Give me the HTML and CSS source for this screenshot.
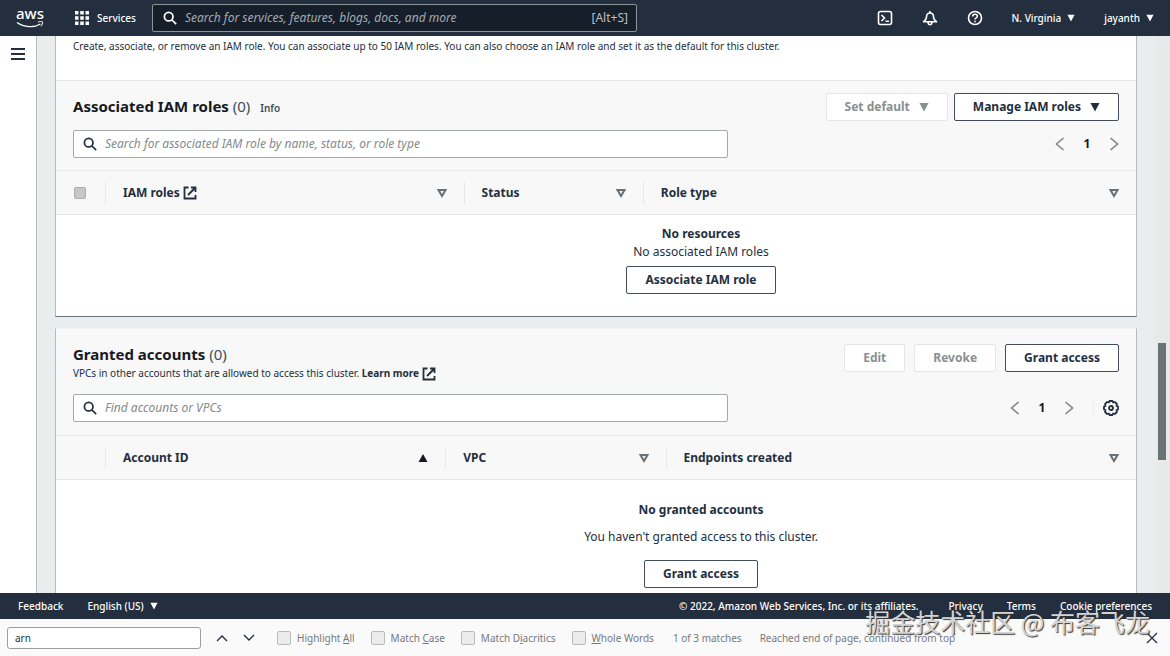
FILE: index.html
```html
<!DOCTYPE html>
<html lang="en">
  <head>
    <meta charset="UTF-8" />
    <meta name="viewport" content="width=device-width, initial-scale=1.0" />
    <title>Amazon Redshift</title>
    <link rel="stylesheet" href="styles.css">
  </head>

  <body>
    <!-- shared icons -->
    <svg class="sprite" aria-hidden="true">
      <symbol id="search" viewBox="0 0 16 16">
        <circle cx="6.5" cy="6.5" r="4.900" fill="none" stroke="currentColor" stroke-width="2" />
        <path d="M10 10l5 5" stroke="currentColor" stroke-width="2" />
      </symbol>
      <symbol id="down" viewBox="0 0 10 10">
        <path d="M.5 1h9L5 9.500z" fill="currentColor" />
      </symbol>
      <symbol id="up" viewBox="0 0 10 10">
        <path d="M.5 9h9L5 1z" fill="currentColor" />
      </symbol>
      <symbol id="sort" viewBox="0 0 10 10">
        <path d="M1.500 2h7L5 8z" fill="none" stroke="currentColor" stroke-width="2" />
      </symbol>
      <symbol id="external" viewBox="0 0 14 14">
        <path d="M5.500 1.500H1.500v11h11V9M8 1.500h4.500V6M12.500 1.500L5 9" fill="none" stroke="currentColor" stroke-width="1.800" />
      </symbol>
      <symbol id="left" viewBox="0 0 10 14">
        <path d="M8.500 1L1.500 7l7 6" fill="none" stroke="currentColor" stroke-width="1.600" />
      </symbol>
      <symbol id="right" viewBox="0 0 10 14">
        <path d="M1.500 1l7 6-7 6" fill="none" stroke="currentColor" stroke-width="1.600" />
      </symbol>
    </svg>

    <header class="topbar">
      <a class="logo" href="#" aria-label="AWS home">
        <span>aws</span>
        <svg viewBox="0 0 28 8" width="28" height="8">
          <path d="M1 1.500c7 5 17 5.500 23.500 1.500" fill="none" stroke="currentColor" stroke-width="1.300" />
          <path d="M22 1c2-.6 3.700-.6 4.500-.2.300 1.300-.3 3-1.500 4.500" fill="none" stroke="currentColor" />
        </svg>
      </a>
      <button class="services">
        <svg viewBox="0 0 14 14" width="14" height="14" fill="currentColor">
          <path d="M0 0h3.500v3.500H0zM5.250 0h3.500v3.500h-3.500zM10.500 0H14v3.500h-3.500zM0 5.250h3.500v3.500H0zM5.250 5.250h3.500v3.500h-3.500zM10.500 5.250H14v3.500h-3.500zM0 10.500h3.500V14H0zM5.250 10.500h3.500V14h-3.500zM10.500 10.500H14V14h-3.500z" />
        </svg>
        Services
      </button>
      <label class="top-search">
        <svg class="icon-search"><use href="#search" /></svg>
        <input type="text" aria-label="Search services" placeholder="Search for services, features, blogs, docs, and more" />
        <span>[Alt+S]</span>
      </label>
      <nav class="top-nav">
        <button aria-label="CloudShell">
          <svg viewBox="0 0 16 16" width="16" height="16" fill="none" stroke="currentColor" stroke-width="1.600">
            <rect x="1.500" y="1.500" width="13" height="13" rx="2" />
            <path d="M4.500 5l3 3-3 3M8.500 11.200h3.500" />
          </svg>
        </button>
        <button aria-label="Notifications">
          <svg viewBox="0 0 16 16" width="16" height="16" fill="none" stroke="currentColor" stroke-width="1.600" stroke-linejoin="round">
            <path d="M8 1v2M1.500 11.700c2.200-1.500 3-3 3-5C4.500 4.500 6 3 8 3s3.500 1.500 3.500 3.700c0 2 .8 3.500 3 5zM6.200 12v1c0 2.200 3.600 2.200 3.600 0v-1" />
          </svg>
        </button>
        <button aria-label="Help">
          <svg viewBox="0 0 16 16" width="16" height="16" fill="none" stroke="currentColor" stroke-width="1.600">
            <circle cx="8" cy="8" r="6.500" />
            <path d="M5.700 6.500c0-3 4.600-2.800 4.600-.2C10.300 8 8 7.700 8 9.500M8 10.700v1.600" />
          </svg>
        </button>
        <button class="menu">N. Virginia <svg class="caret"><use href="#down" /></svg></button>
        <button class="menu">jayanth <svg class="caret"><use href="#down" /></svg></button>
      </nav>
    </header>

    <div class="content">
      <aside class="side">
        <button aria-label="Open navigation">
          <svg viewBox="0 0 14 12" width="14" height="12">
            <path d="M0 1h14M0 6h14M0 11h14" stroke="currentColor" stroke-width="2" />
          </svg>
        </button>
      </aside>

      <main>
        <section class="panel roles">
          <p class="intro">Create, associate, or remove an IAM role. You can associate up to 50 IAM roles. You can also choose an IAM role and set it as the default for this cluster.</p>
          <div class="panel-head">
            <div class="title-row">
              <h2>Associated IAM roles <span>(0)</span> <a href="#">Info</a></h2>
              <div class="actions">
                <button class="btn" disabled>Set default <svg class="caret"><use href="#down" /></svg></button>
                <button class="btn">Manage IAM roles <svg class="caret"><use href="#down" /></svg></button>
              </div>
            </div>
            <div class="filter-row">
              <label class="filter">
                <svg class="icon-search"><use href="#search" /></svg>
                <input type="text" aria-label="Search roles" placeholder="Search for associated IAM role by name, status, or role type" />
              </label>
              <div class="pager">
                <button aria-label="Previous page"><svg><use href="#left" /></svg></button>
                <b>1</b>
                <button aria-label="Next page"><svg><use href="#right" /></svg></button>
              </div>
            </div>
          </div>
          <table>
            <thead>
              <tr>
                <th class="col-check"><input type="checkbox" class="check-all" aria-label="Select all roles" disabled /></th>
                <th class="col-role"><div class="cell"><a href="#">IAM roles <svg class="external"><use href="#external" /></svg></a> <svg class="sort"><use href="#sort" /></svg></div></th>
                <th class="col-status"><div class="cell">Status <svg class="sort"><use href="#sort" /></svg></div></th>
                <th><div class="cell">Role type <svg class="sort"><use href="#sort" /></svg></div></th>
              </tr>
            </thead>
            <tbody>
              <tr>
                <td colspan="4">
                  <div class="empty">
                    <b>No resources</b>
                    <span>No associated IAM roles</span>
                    <button class="btn">Associate IAM role</button>
                  </div>
                </td>
              </tr>
            </tbody>
          </table>
        </section>

        <section class="panel accounts">
          <div class="panel-head">
            <div class="title-row">
              <div>
                <h2>Granted accounts <span>(0)</span></h2>
                <p>VPCs in other accounts that are allowed to access this cluster. <a href="#">Learn more <svg class="external"><use href="#external" /></svg></a></p>
              </div>
              <div class="actions wide">
                <button class="btn" disabled>Edit</button>
                <button class="btn" disabled>Revoke</button>
                <button class="btn">Grant access</button>
              </div>
            </div>
            <div class="filter-row">
              <label class="filter">
                <svg class="icon-search"><use href="#search" /></svg>
                <input type="text" aria-label="Search accounts" placeholder="Find accounts or VPCs" />
              </label>
              <div class="pager">
                <button aria-label="Previous page"><svg><use href="#left" /></svg></button>
                <b>1</b>
                <button aria-label="Next page"><svg><use href="#right" /></svg></button>
                <button class="settings" aria-label="Preferences">
                  <svg viewBox="0 0 16 16" fill="none" stroke="currentColor">
                    <path d="M6.500 1h3l.6 1.500L11.900 2 14 4.100l-.5 1.800 1.500.6v3l-1.500.6.500 1.800-2.100 2.100-1.800-.5L9.500 15h-3l-.6-1.500-1.800.5L2 11.900l.5-1.800L1 9.500v-3l1.500-.6L2 4.100 4.100 2l1.800.5z" stroke-width="1.800" stroke-linejoin="round" />
                    <circle cx="8" cy="8" r="2" stroke-width="1.800" />
                  </svg>
                </button>
              </div>
            </div>
          </div>
          <table>
            <thead>
              <tr>
                <th class="col-check"></th>
                <th class="col-account sorted"><div class="cell">Account ID <svg class="sort"><use href="#up" /></svg></div></th>
                <th class="col-vpc"><div class="cell">VPC <svg class="sort"><use href="#sort" /></svg></div></th>
                <th><div class="cell">Endpoints created <svg class="sort"><use href="#sort" /></svg></div></th>
              </tr>
            </thead>
            <tbody>
              <tr>
                <td colspan="4">
                  <div class="empty spaced">
                    <b>No granted accounts</b>
                    <span>You haven't granted access to this cluster.</span>
                    <button class="btn">Grant access</button>
                  </div>
                </td>
              </tr>
            </tbody>
          </table>
        </section>
      </main>

      <div class="scrollbar"><div class="thumb"></div></div>
    </div>

    <footer class="footer">
      <a href="#">Feedback</a>
      <button>English (US) <svg class="caret"><use href="#down" /></svg></button>
      <span class="copyright">© 2022, Amazon Web Services, Inc. or its affiliates.</span>
      <a href="#">Privacy</a>
      <a href="#">Terms</a>
      <a href="#">Cookie preferences</a>
    </footer>

    <div class="findbar">
      <input type="text" class="find-input" aria-label="Find in page" value="arn" />
      <button aria-label="Previous match"><svg viewBox="0 0 12 8" width="12" height="8"><path d="M1 7l5-5 5 5" fill="none" stroke="currentColor" stroke-width="1.400" /></svg></button>
      <button aria-label="Next match"><svg viewBox="0 0 12 8" width="12" height="8"><path d="M1 1l5 5 5-5" fill="none" stroke="currentColor" stroke-width="1.400" /></svg></button>
      <div class="options">
        <label><input type="checkbox" /><span>Highlight <u>A</u>ll</span></label>
        <label><input type="checkbox" /><span>Match <u>C</u>ase</span></label>
        <label><input type="checkbox" /><span>Match D<u>i</u>acritics</span></label>
        <label><input type="checkbox" /><span><u>W</u>hole Words</span></label>
      </div>
      <span class="matches">1 of 3 matches</span>
      <span>Reached end of page, continued from top</span>
      <button class="close" aria-label="Close find bar"><svg viewBox="0 0 12 12" width="12" height="12"><path d="M1 1l10 10M11 1L1 11" stroke="currentColor" stroke-width="1.300" /></svg></button>
    </div>

    <div class="watermark">掘金技术社区 @ 布客飞龙</div>
  </body>
</html>
```
FILE: styles.css
```css
* {
  box-sizing: border-box;
}
body {
  margin: 0;
  height: 100vh;
  display: flex;
  flex-direction: column;
  position: relative;
  overflow: hidden;
  font-family: "Noto Sans", "Open Sans", sans-serif;
  font-size: 12px;
  line-height: 18px;
  color: #232f3e;
  background: #eaeded;
}
button {
  display: flex;
  align-items: center;
  padding: 0;
  border: 0;
  background: none;
  color: inherit;
  font: inherit;
}
input {
  font: inherit;
  color: inherit;
}
a {
  color: inherit;
  text-decoration: none;
}
svg {
  flex: none;
}
.sprite {
  position: absolute;
  width: 0;
  height: 0;
}
.icon-search {
  width: 14px;
  height: 14px;
}
.caret,
.sort {
  width: 10px;
  height: 10px;
}
.external {
  width: 14px;
  height: 14px;
  vertical-align: middle;
}

/* top bar */
.topbar {
  display: flex;
  align-items: center;
  height: 36px;
  flex: none;
  padding: 0 16px;
  background: #232f3e;
  color: #fff;
  font-size: 10px;
  font-weight: 500;
}
.logo {
  display: flex;
  flex-direction: column;
  align-items: center;
  width: 28px;
  margin-right: 31px;
}
.logo span {
  font-size: 15px;
  line-height: 12px;
  padding-bottom: 2px;
}
.services {
  gap: 8px;
  margin-right: 16px;
}
.top-search {
  display: flex;
  align-items: center;
  gap: 8px;
  width: 43%;
  max-width: 485px;
  height: 28px;
  padding: 0 8px 0 10px;
  border: 1px solid #879596;
  border-radius: 2px;
  background: #161e2a;
  color: #b8bec3;
  font-size: 12px;
  font-weight: 400;
}
.top-search .icon-search {
  color: #fff;
}
.top-search input,
.filter input {
  flex: 1;
  min-width: 0;
  padding: 0;
  border: 0;
  outline: 0;
  background: none;
}
.top-search input::placeholder {
  color: #a3abb2;
  font-style: italic;
}
.top-nav {
  display: flex;
  align-items: center;
  gap: 29px;
  margin-left: auto;
}
.top-nav .menu,
.footer button {
  gap: 6px;
}
.topbar .caret,
.footer .caret {
  width: 8px;
  height: 8px;
}

/* page */
.content {
  display: flex;
  flex: 1;
  min-height: 0;
  overflow: hidden;
}
.side {
  flex: none;
  width: 37px;
  padding: 12px 11px;
  border-right: 1px solid #b9bebe;
  background: #fff;
}
main {
  flex: 1;
  min-width: 0;
  padding: 0 19px 0 18px;
}
.panel {
  border: 1px solid #b5baba;
  border-top: 0;
  background: #fff;
}
.roles {
  margin-bottom: 11px;
  border-bottom-color: #687078;
}
.accounts {
  border-top: 1px solid #f2f3f3;
}
.intro {
  height: 44px;
  margin: 0;
  padding: 1px 17px 0;
  font-size: 10px;
}
.panel-head {
  padding: 12px 17px;
  border-top: 1px solid #e6e8e8;
  background: #f8f8f8;
}
.accounts .panel-head {
  padding-top: 15px;
  padding-bottom: 13px;
  border-top: 0;
}
.title-row,
.filter-row,
.actions,
.pager {
  display: flex;
  align-items: center;
}
.title-row,
.filter-row {
  justify-content: space-between;
}
.accounts .title-row {
  align-items: flex-start;
}
h2 {
  margin: 0;
  font-size: 15px;
  line-height: 20px;
  color: #16191f;
}
h2 span {
  font-weight: 400;
  color: #414d5c;
}
h2 a {
  margin-left: 6px;
  font-size: 10px;
  font-weight: 600;
  color: #414d5c;
}
.title-row p {
  margin: 0;
  font-size: 10px;
}
.title-row p a {
  font-weight: 700;
}
.actions {
  gap: 6px;
}
.actions.wide {
  gap: 9px;
}
.btn {
  justify-content: center;
  gap: 9px;
  height: 28px;
  padding: 0 18px;
  border: 1px solid #414d5c;
  border-radius: 2px;
  background: #fff;
  font-weight: 700;
  white-space: nowrap;
}
.btn:disabled {
  border-color: #e4e6e6;
  color: #879090;
}
.filter-row {
  margin-top: 9px;
}
.accounts .filter-row {
  margin-top: 12px;
}
.filter {
  display: flex;
  align-items: center;
  gap: 8px;
  width: 62.6%;
  height: 28px;
  padding: 0 9px;
  border: 1px solid #a3a9a9;
  border-radius: 2px;
  background: #fff;
}
.filter input::placeholder {
  color: #838b8c;
  font-style: italic;
}
.pager {
  color: #16191f;
}
.pager b {
  width: 44px;
  text-align: center;
}
.pager button {
  color: #7d8688;
}
.pager svg {
  width: 10px;
  height: 14px;
}
.pager .settings {
  margin-left: 19px;
  padding-left: 9px;
  border-left: 1px solid #eceeee;
  color: #232f3e;
}
.pager .settings svg {
  width: 16px;
  height: 16px;
}

/* tables */
table {
  width: 100%;
  table-layout: fixed;
  border-collapse: collapse;
}
th {
  height: 44px;
  padding: 0;
  border-top: 1px solid #e6e8e8;
  border-bottom: 1px solid #e6e8e8;
  background: #f8f8f8;
  text-align: left;
}
td {
  padding: 0;
}
.col-check {
  width: 49px;
}
.col-role {
  width: 33.2%;
}
.col-status {
  width: 16.6%;
}
.col-account {
  width: 31.5%;
}
.col-vpc {
  width: 20.4%;
}
.cell {
  display: flex;
  align-items: center;
  justify-content: space-between;
  height: 22px;
  padding: 0 17px;
  border-left: 1px solid #e6e8e8;
}
.sort {
  color: #687078;
}
.sorted .sort {
  color: #16191f;
}
.check-all {
  appearance: none;
  display: block;
  width: 12px;
  height: 12px;
  margin: 0 0 0 18px;
  border: 1px solid #a9adad;
  border-radius: 2px;
  background: #c4c8c8;
}
.empty {
  display: flex;
  flex-direction: column;
  align-items: center;
  padding: 10px 18px 22px 228px;
}
.empty .btn {
  margin-top: 5px;
}
.empty.spaced {
  gap: 9px;
  padding-top: 21px;
}

.scrollbar {
  flex: none;
  width: 14px;
  padding: 307px 4px 0 2px;
  background: #e8eaea;
}
.thumb {
  height: 117px;
  background: #687476;
}

/* bottom bars */
.footer {
  display: flex;
  align-items: center;
  flex: none;
  gap: 24px;
  height: 26px;
  padding: 0 18px;
  background: #232f3e;
  color: #fff;
  font-size: 10px;
  font-weight: 500;
}
.copyright {
  margin-left: auto;
  margin-right: 6px;
}
.findbar {
  display: flex;
  align-items: center;
  flex: none;
  height: 37px;
  padding: 0 12px 0 7px;
  background: #fafafa;
  color: #75797c;
  font-size: 10px;
}
.find-input {
  width: 194px;
  height: 22px;
  margin-right: 15px;
  padding: 0 7px;
  border: 1px solid #9a9ea0;
  border-radius: 3px;
  background: #fff;
  color: #232f3e;
}
.findbar button {
  margin-right: 15px;
  color: #232f3e;
}
.options {
  display: flex;
  gap: 16px;
  margin: 0 19px 0 7px;
}
.options label {
  display: flex;
  align-items: center;
  gap: 6px;
}
.options input {
  appearance: none;
  width: 14px;
  height: 14px;
  margin: 0;
  border: 1px solid #b9bcbc;
  border-radius: 2px;
  background: #ececec;
}
.matches {
  margin-right: 18px;
}
.findbar .close {
  margin: 0 0 0 auto;
}
.watermark {
  position: absolute;
  right: 20px;
  bottom: 16px;
  font-family: "Noto Sans CJK SC", sans-serif;
  font-size: 25px;
  line-height: 38px;
  color: #d4d4d4;
  text-shadow: 1px 1px 1px #333;
  pointer-events: none;
}
```
